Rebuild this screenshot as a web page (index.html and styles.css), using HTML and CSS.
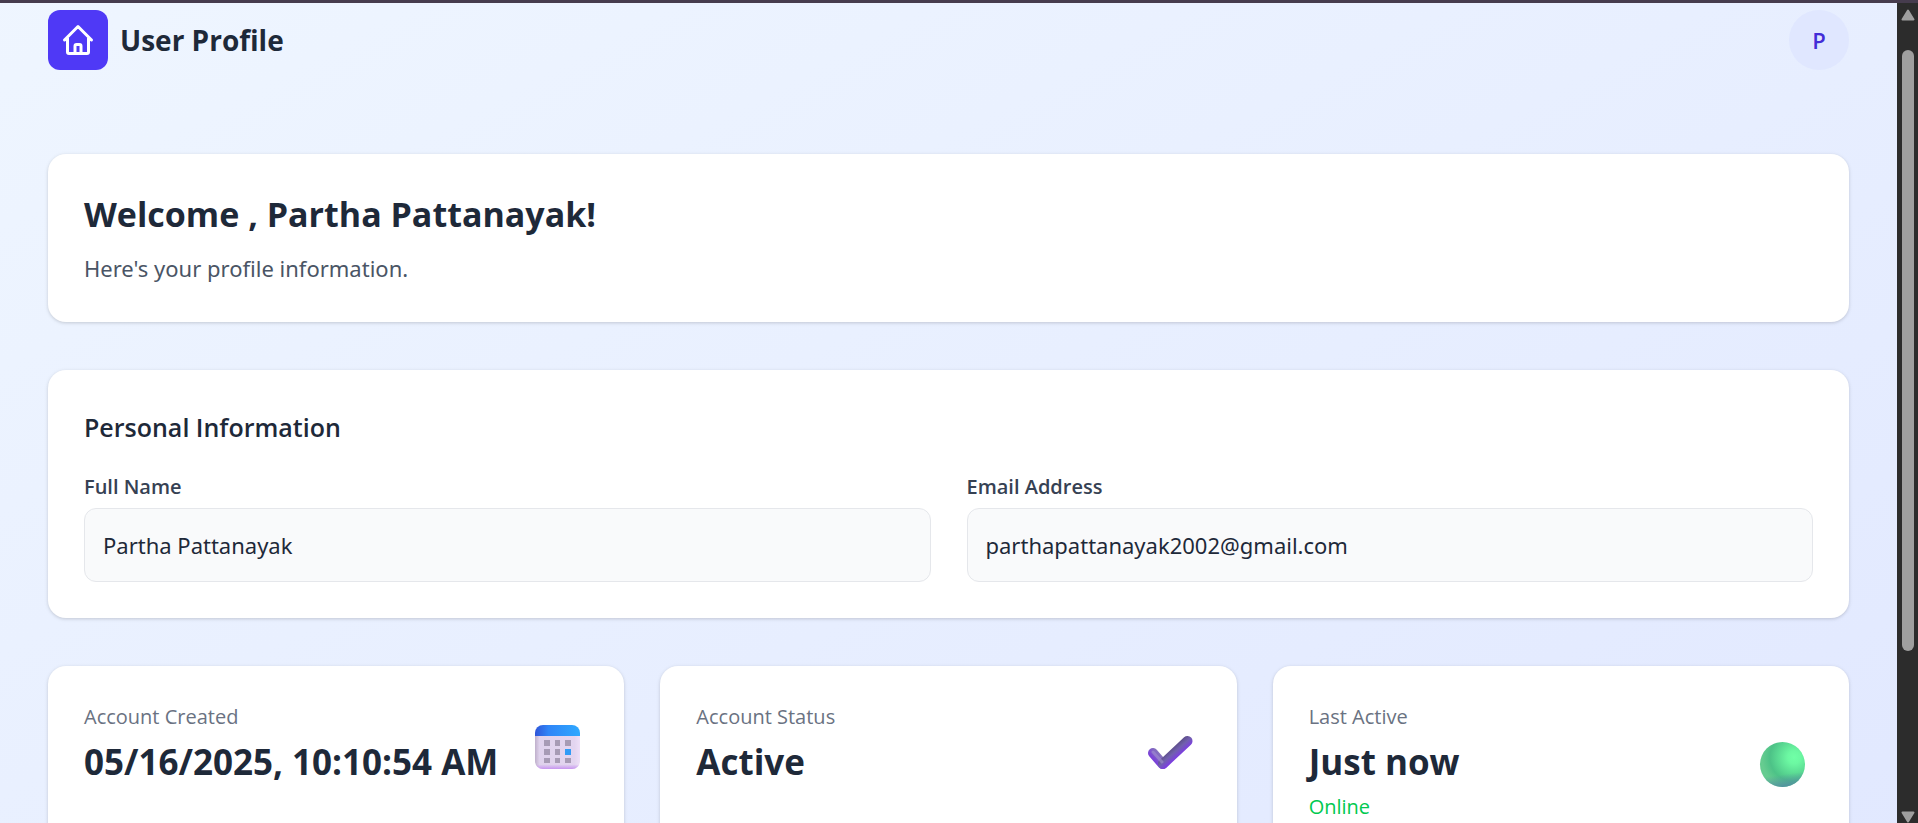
FILE: index.html
```html
<!DOCTYPE html>
<html lang="en">
<head>
<meta charset="utf-8">
<title>User Profile</title>
<link rel="stylesheet" href="styles.css">
</head>
<body>
<div class="window">
  <div class="viewport">
    <div class="page">
      <header class="topbar">
        <div class="brand">
          <a class="logo" href="#" aria-label="Home">
            <svg viewBox="0 0 24 24" fill="none" stroke="currentColor" stroke-width="2" stroke-linecap="round" stroke-linejoin="round"><path d="M3 12l2-2m0 0l7-7 7 7M5 10v10a1 1 0 001 1h3m10-11l2 2m-2-2v10a1 1 0 01-1 1h-3m-6 0a1 1 0 001-1v-4a1 1 0 011-1h2a1 1 0 011 1v4a1 1 0 001 1m-6 0h6"/></svg>
          </a>
          <h1 class="brand-name">User Profile</h1>
        </div>
        <button class="avatar" type="button">P</button>
      </header>

      <main class="content">
        <section class="card">
          <h2 class="welcome">Welcome , Partha Pattanayak!</h2>
          <p class="lead">Here's your profile information.</p>
        </section>

        <section class="card">
          <h3 class="section-title">Personal Information</h3>
          <div class="fields">
            <div class="field">
              <label for="full-name">Full Name</label>
              <input id="full-name" type="text" value="Partha Pattanayak" readonly>
            </div>
            <div class="field">
              <label for="email">Email Address</label>
              <input id="email" type="email" value="parthapattanayak2002@gmail.com" readonly>
            </div>
          </div>
        </section>

        <div class="stats">
          <section class="card">
            <div class="stat">
              <div class="stat-text">
                <p class="stat-label">Account Created</p>
                <p class="stat-value">05/16/2025, 10:10:54 AM</p>
              </div>
              <svg class="stat-icon" viewBox="0 -2 60 60" aria-hidden="true">
                <defs>
                  <linearGradient id="cal-top" x1="0" x2="1"><stop offset="0" stop-color="#2f55d8"/><stop offset=".3" stop-color="#2f85f7"/><stop offset="1" stop-color="#2ea9ff"/></linearGradient>
                  <linearGradient id="cal-side" x1="0" x2="1"><stop offset="0" stop-color="#bfb0cb"/><stop offset=".1" stop-color="#dfd2ec"/><stop offset=".88" stop-color="#e3d5f0"/><stop offset="1" stop-color="#eee0f8"/></linearGradient>
                  <linearGradient id="cal-foot" x1="0" y1="0" x2="0" y2="1"><stop offset=".86" stop-color="#c795f0" stop-opacity="0"/><stop offset="1" stop-color="#c795f0"/></linearGradient>
                </defs>
                <path d="M7 20h45v25a8 8 0 0 1-8 8H15a8 8 0 0 1-8-8z" fill="url(#cal-side)"/>
                <path d="M7 20h45v25a8 8 0 0 1-8 8H15a8 8 0 0 1-8-8z" fill="url(#cal-foot)"/>
                <path d="M15 9h29a8 8 0 0 1 8 8v3H7v-3a8 8 0 0 1 8-8z" fill="url(#cal-top)"/>
                <path d="M16 24h6v6h-6zM27 24h5v6h-5zM37 24h6v6h-6zM16 33h6v6h-6zM27 33h5v6h-5zM16 42h6v5h-6zM27 42h5v5h-5zM37 42h6v5h-6z" fill="#a79bb5"/>
                <path d="M37 33h6v6h-6z" fill="#319bf6"/>
              </svg>
            </div>
          </section>

          <section class="card">
            <div class="stat">
              <div class="stat-text">
                <p class="stat-label">Account Status</p>
                <p class="stat-value">Active</p>
              </div>
              <svg class="stat-icon" viewBox="0 -2 60 60" aria-hidden="true">
                <defs>
                  <linearGradient id="tick" gradientUnits="userSpaceOnUse" x1="30" y1="31" x2="38" y2="40"><stop offset="0" stop-color="#57487f"/><stop offset=".5" stop-color="#7160ae"/><stop offset="1" stop-color="#7c3ce2"/></linearGradient>
                  <linearGradient id="tick-left" gradientUnits="userSpaceOnUse" x1="20" y1="38" x2="13" y2="44"><stop offset="0" stop-color="#8678b8"/><stop offset="1" stop-color="#7a42d8"/></linearGradient>
                </defs>
                <path d="M12 37L21.500 48" stroke="url(#tick-left)" stroke-width="10" stroke-linecap="round" fill="none"/>
                <path d="M22 48L46.500 25" stroke="url(#tick)" stroke-width="10" stroke-linecap="round" fill="none"/>
                <path d="M12 36L21 46" stroke="#a294cf" stroke-width="3" stroke-linecap="round" opacity=".6"/>
              </svg>
            </div>
          </section>

          <section class="card">
            <div class="stat">
              <div class="stat-text">
                <p class="stat-label">Last Active</p>
                <p class="stat-value">Just now</p>
                <p class="stat-note">Online</p>
              </div>
              <svg class="stat-icon" viewBox="0 0 60 60" aria-hidden="true">
                <defs>
                  <radialGradient id="ball" cx=".76" cy=".34" r=".72"><stop offset="0" stop-color="#70ffa6"/><stop offset=".2" stop-color="#6cf8a2"/><stop offset=".75" stop-color="#4dc287"/><stop offset="1" stop-color="#66cc90"/></radialGradient>
                  <linearGradient id="ball-foot" x1=".42" y1="0" x2=".55" y2="1"><stop offset=".72" stop-color="#5290a0" stop-opacity="0"/><stop offset="1" stop-color="#5290a0"/></linearGradient>
                </defs>
                <circle cx="29.500" cy="32.500" r="22.500" fill="url(#ball)"/>
                <circle cx="29.500" cy="32.500" r="22.500" fill="url(#ball-foot)"/>
              </svg>
            </div>
          </section>
        </div>
      </main>
    </div>
  </div>
  <div class="scrollbar" aria-hidden="true">
    <svg class="scroll-arrow" viewBox="0 0 14 12"><path d="M7 1.500L12.500 10.500H1.500z"/></svg>
    <div class="scroll-track"><div class="scroll-thumb"></div></div>
    <svg class="scroll-arrow" viewBox="0 0 14 12"><path d="M7 10.500L12.500 1.500H1.500z"/></svg>
  </div>
</div>
</body>
</html>
```
FILE: styles.css
```css
* { box-sizing: border-box; }

body, h1, h2, h3, p { margin: 0; }

body {
  font-family: "Open Sans", "Noto Sans", sans-serif;
  font-size: 22px;
  color: #1e2939;
}

.window {
  display: flex;
  height: 100vh;
  overflow: hidden;
  border-top: 3px solid #463c4e;
}

.viewport {
  flex: 1;
  min-width: 0;
  overflow: hidden;
}

.page {
  padding: 7px 48px 180px;
  background: linear-gradient(to bottom right, #eff6ff -3%, #e0e7ff);
}

.topbar {
  display: flex;
  justify-content: space-between;
  align-items: center;
  margin-bottom: 84px;
}

.brand {
  display: flex;
  align-items: center;
  gap: 12px;
}

.logo {
  display: flex;
  align-items: center;
  justify-content: center;
  width: 60px;
  height: 60px;
  border-radius: 12px;
  background: #4f39f6;
  color: #fff;
}

.logo svg { width: 36px; height: 36px; }

.brand-name {
  font-size: 28px;
  line-height: 42px;
  font-weight: 700;
}

.avatar {
  width: 60px;
  height: 60px;
  padding: 0;
  border: 0;
  border-radius: 50%;
  background: #e0e7ff;
  color: #432dd7;
  font: 600 22px/36px "Open Sans", "Noto Sans", sans-serif;
}

.content {
  display: flex;
  flex-direction: column;
  gap: 48px;
}

.card {
  padding: 36px;
  border-radius: 18px;
  background: #fff;
  box-shadow: 0 1px 4px rgba(0, 0, 0, .1), 0 1px 3px rgba(0, 0, 0, .08);
}

.welcome {
  margin-bottom: 12px;
  font-size: 34px;
  line-height: 48px;
  font-weight: 700;
}

.lead {
  font-family: "Noto Sans", "Open Sans", sans-serif;
  font-size: 22px;
  line-height: 36px;
  color: #4a5565;
}

.section-title {
  margin-bottom: 24px;
  font-size: 25px;
  line-height: 42px;
  font-weight: 600;
}

.fields {
  display: grid;
  grid-template-columns: 1fr 1fr;
  gap: 36px;
}

.field {
  display: flex;
  flex-direction: column;
  gap: 6px;
}

.field label {
  font-size: 20px;
  line-height: 30px;
  font-weight: 600;
  color: #364153;
}

.field input {
  width: 100%;
  height: 74px;
  padding: 18px;
  border: 1px solid #e5e7eb;
  border-radius: 12px;
  background: #f9fafb;
  color: #1e2939;
  font: 22px/36px "Noto Sans", "Open Sans", sans-serif;
}

.stats {
  display: grid;
  grid-template-columns: repeat(3, 1fr);
  gap: 36px;
}

.stat {
  display: flex;
  align-items: center;
  justify-content: space-between;
}

.stat-text {
  display: flex;
  flex-direction: column;
  gap: 6px;
}

.stat-label {
  font-size: 20px;
  line-height: 30px;
  color: #6a7282;
}

.stat-value {
  font-size: 35px;
  line-height: 48px;
  font-weight: 700;
  white-space: nowrap;
}

.stat-note {
  font-size: 20px;
  line-height: 30px;
  color: #00c950;
}

.stat-icon {
  flex: none;
  width: 60px;
  height: 60px;
}

.scrollbar {
  display: flex;
  flex-direction: column;
  align-items: center;
  width: 21px;
  padding: 6px 0 0;
  background: #2c2c2c;
}

.scroll-arrow {
  flex: none;
  width: 14px;
  height: 12px;
  fill: #9f9f9f;
  stroke: #9f9f9f;
  stroke-width: 2;
  stroke-linejoin: round;
}

.scroll-track {
  flex: 1;
  width: 12px;
  padding: 29px 0 0;
}

.scroll-thumb {
  height: 79%;
  border-radius: 6px;
  background: #9f9f9f;
}
```
